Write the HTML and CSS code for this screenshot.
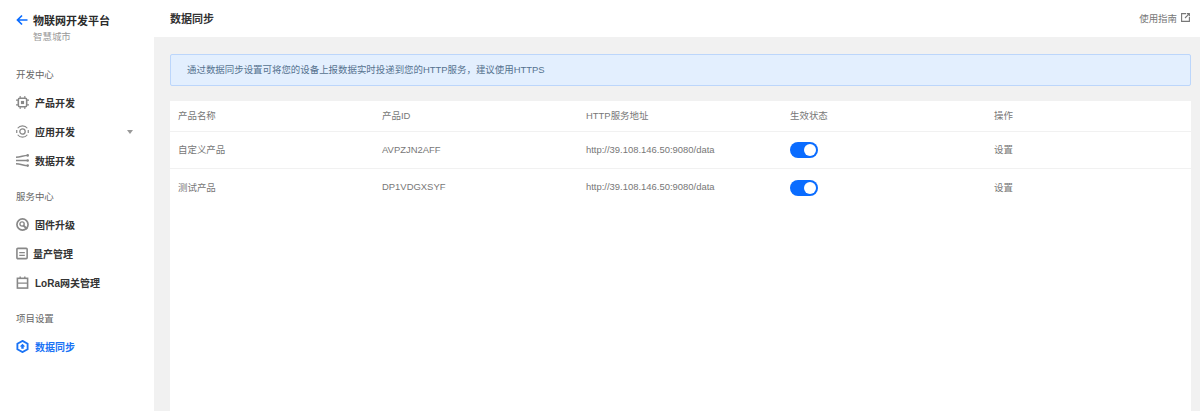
FILE: index.html
```html
<!DOCTYPE html>
<html lang="zh">
<head>
<meta charset="utf-8">
<title>数据同步</title>
<link rel="stylesheet" href="styles.css">
</head>
<body>
<div class="app">
  <aside class="sidebar">
    <div class="brand">
      <svg class="back" width="12" height="12" viewBox="0 0 12 12"><path d="M11.500 6H1.500M6 1.500L1.500 6L6 10.500" fill="none" stroke="#0a6cff" stroke-width="1.700"/></svg>
      <div>
        <div class="brand-title">物联网开发平台</div>
        <div class="brand-sub">智慧城市</div>
      </div>
    </div>
    <div class="group first">开发中心</div>
    <div class="item">
      <svg class="ico" viewBox="0 0 14 14"><rect x="2.500" y="2.500" width="9" height="9" rx="1.500" fill="none" stroke="#888" stroke-width="1.700"/><rect x="5.300" y="5.300" width="3.400" height="3.400" fill="#888"/><path d="M4.500 0v2.500M9.500 0v2.500M4.500 11.500V14M9.500 11.500V14M0 4.500h2.500M0 9.500h2.500M11.500 4.500H14M11.500 9.500H14" stroke="#888" stroke-width="1.200"/></svg>
      <span>产品开发</span>
    </div>
    <div class="item">
      <svg class="ico" viewBox="0 0 14 14"><circle cx="7" cy="7" r="2.900" fill="none" stroke="#888" stroke-width="1.400"/><path d="M1.800 3.500A6.500 6.500 0 0 1 12.200 3.500M1.800 10.500A6.500 6.500 0 0 0 12.200 10.500M.8 5.500v3M13.200 5.500v3" fill="none" stroke="#888" stroke-width="1.300"/></svg>
      <span>应用开发</span><i class="caret"></i>
    </div>
    <div class="item">
      <svg class="ico" viewBox="0 0 14 14"><path d="M0 3.500C5 3.500 8 1.500 12.500 1.500M0 7H12.500M0 10.500C5 10.500 8 12.500 12.500 12.500" fill="none" stroke="#888" stroke-width="1.500"/><circle cx="12.600" cy="1.500" r="1.400" fill="#888"/><circle cx="12.600" cy="7" r="1.400" fill="#888"/><circle cx="12.600" cy="12.500" r="1.400" fill="#888"/></svg>
      <span>数据开发</span>
    </div>
    <div class="group">服务中心</div>
    <div class="item">
      <svg class="ico" viewBox="0 0 14 14"><circle cx="7" cy="7" r="6" fill="none" stroke="#888" stroke-width="1.800"/><circle cx="6.500" cy="6.500" r="2.300" fill="none" stroke="#888" stroke-width="1.500"/><path d="M8.200 8.200L12 12" stroke="#888" stroke-width="2.200"/></svg>
      <span>固件升级</span>
    </div>
    <div class="item">
      <svg class="ico" viewBox="0 0 14 14"><rect x="1" y="1.500" width="11" height="11" rx="1" fill="none" stroke="#888" stroke-width="1.700"/><path d="M3.500 6H9.500M3.500 9H9.500" stroke="#888" stroke-width="1.300"/></svg>
      <span class="tight">量产管理</span>
    </div>
    <div class="item">
      <svg class="ico" viewBox="0 0 14 14"><rect x="1.500" y="2.500" width="11" height="10.500" fill="none" stroke="#888" stroke-width="1.700"/><path d="M1.500 7.700H12.500M4.500 .5V2.500M9.500 .5V2.500" stroke="#888" stroke-width="1.500"/></svg>
      <span>LoRa网关管理</span>
    </div>
    <div class="group">项目设置</div>
    <div class="item active">
      <svg class="ico" viewBox="0 0 14 14"><path d="M7 1L12.500 4V10L7 13L1.500 10V4Z" fill="none" stroke="#1a73f5" stroke-width="2"/><path d="M7 4L10 7H8.300V9.500H5.700V7H4Z" fill="#1a73f5"/></svg>
      <span>数据同步</span>
    </div>
  </aside>
  <main class="main">
    <header class="topbar">
      <h1>数据同步</h1>
      <a class="guide">使用指南
        <svg width="9" height="9" viewBox="0 0 9 9"><path d="M5 .6H.6V8.400H8.400V4M4 5L8.400 .6M5.800 .6H8.400V3.200" fill="none" stroke="#777" stroke-width="1.100"/></svg>
      </a>
    </header>
    <div class="content">
      <div class="notice">通过数据同步设置可将您的设备上报数据实时投递到您的HTTP服务，建议使用HTTPS</div>
      <section class="card">
        <div class="row head">
          <div>产品名称</div><div>产品ID</div><div>HTTP服务地址</div><div>生效状态</div><div>操作</div>
        </div>
        <div class="row">
          <div>自定义产品</div><div>AVPZJN2AFF</div><div>http://39.108.146.50:9080/data</div><div class="toggle-cell"><span class="switch"></span></div><div>设置</div>
        </div>
        <div class="row last">
          <div>测试产品</div><div>DP1VDGXSYF</div><div>http://39.108.146.50:9080/data</div><div class="toggle-cell"><span class="switch"></span></div><div>设置</div>
        </div>
      </section>
    </div>
  </main>
</div>
</body>
</html>
```

FILE: styles.css
```css
* { box-sizing: border-box; }
html, body { margin: 0; height: 100%; overflow: hidden; }
body {
  font-family: "Liberation Sans", "Noto Sans CJK SC", sans-serif;
  font-size: 9.450px;
  color: #777;
  background: #f1f1f1;
}
.app { display: flex; height: 411px; }
.sidebar {
  width: 154px;
  flex: none;
  background: #fff;
  padding: 14px 0 0 16px;
}
.brand { display: flex; align-items: flex-start; gap: 5px; }
.back { margin-top: 0; }
.brand-title { font-size: 11px; line-height: 14px; font-weight: 700; color: #2b2b2b; }
.brand-sub { font-size: 9.450px; line-height: 14px; margin-top: 2px; color: #9a9a9a; }
.group { font-size: 9.450px; line-height: 14px; color: #666; margin-top: 15px; height: 14px; }
.group.first { margin-top: 24px; }
.item {
  display: flex;
  align-items: center;
  height: 29px;
  font-size: 10px;
  font-weight: 700;
  color: #333;
}
.group + .item { margin-top: 6px; }
.ico { width: 13px; height: 13px; margin-right: 6px; flex: none; }
.tight { margin-left: -2px; }
.item.active { color: #1a73f5; }
.caret {
  margin-left: 52px;
  width: 0; height: 0;
  border-left: 3px solid transparent;
  border-right: 3px solid transparent;
  border-top: 4px solid #999;
}
.main { flex: 1; min-width: 0; display: flex; flex-direction: column; }
.topbar {
  height: 37px;
  background: #fff;
  display: flex;
  align-items: center;
  justify-content: space-between;
  padding: 0 10px 2px 16px;
}
.topbar h1 { margin: 0; font-size: 11px; font-weight: 700; color: #333; }
.guide { display: flex; align-items: center; gap: 4px; color: #777; }
.content { padding: 17px 9px 0 16px; flex: 1; display: flex; flex-direction: column; }
.notice {
  height: 32px;
  line-height: 29px;
  background: #e3effe;
  border: 1px solid #bcd6fb;
  border-radius: 2px;
  padding-left: 16px;
  color: #55728f;
}
.card { margin-top: 15px; background: #fff; flex: 1; }
.row {
  display: grid;
  grid-template-columns: 204px 204px 204px 204px 1fr;
  height: 37px;
  padding: 0 0 2px 8px;
  align-items: center;
  border-bottom: 1px solid #f1f1f1;
}
.row.head { height: 31px; }
.row.last { border-bottom: 0; }
.toggle-cell { margin-bottom: -2px; }
.switch {
  display: block;
  position: relative;
  width: 28px;
  height: 16px;
  border-radius: 8px;
  background: #0a6cff;
}
.switch::after {
  content: "";
  position: absolute;
  top: 2px;
  right: 2px;
  width: 12px;
  height: 12px;
  border-radius: 50%;
  background: #fff;
}
```
